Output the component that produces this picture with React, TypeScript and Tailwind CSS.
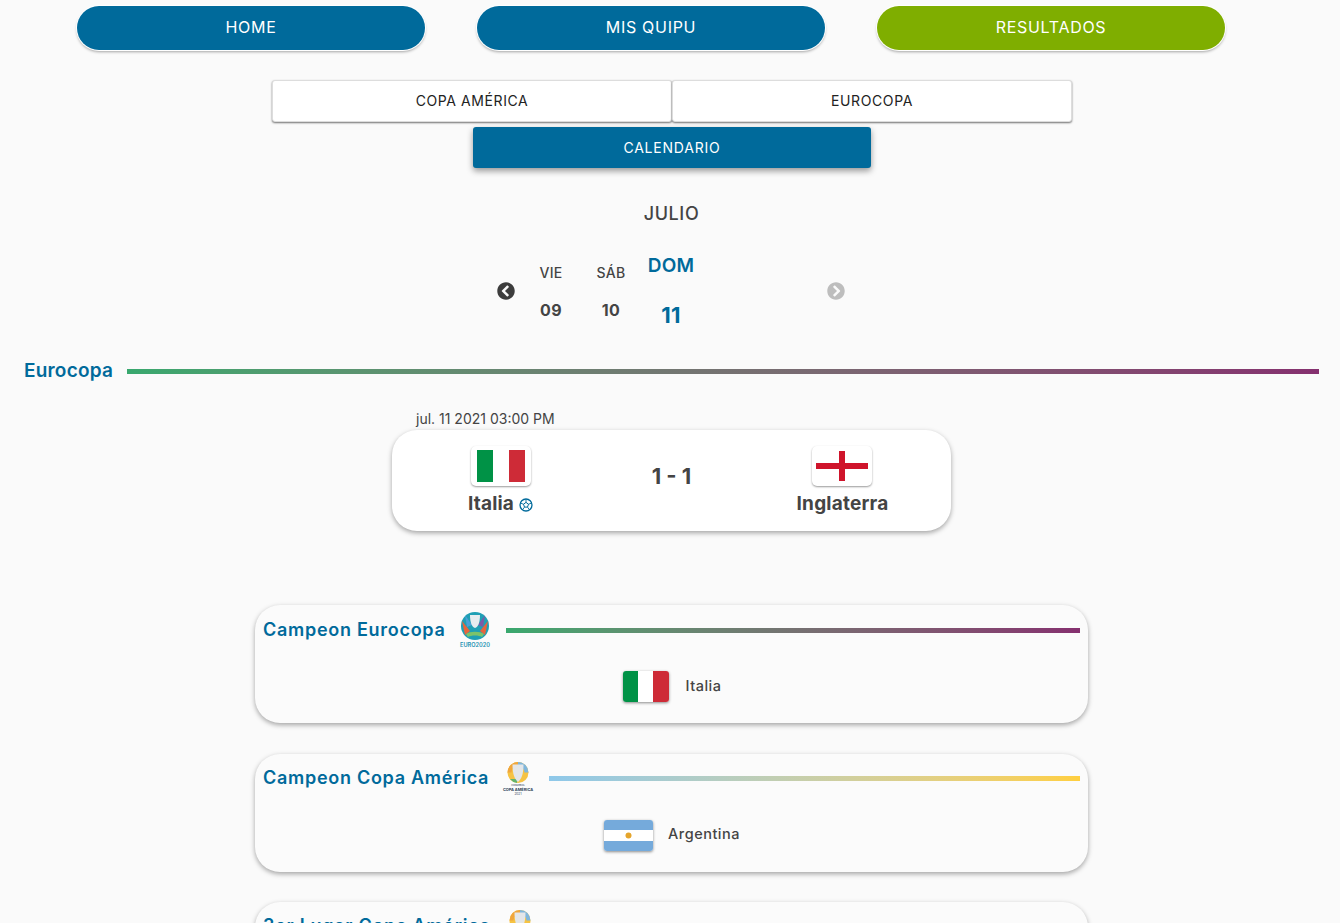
import type { ReactNode } from "react";
import { FaChevronCircleLeft, FaChevronCircleRight } from "react-icons/fa";

function NavButton({ label, active }: { label: string; active?: boolean }) {
  return (
    <div className="w-[400px] px-[26px]">
      <div
        className={`flex h-[44px] items-center justify-center rounded-[22px] pb-[2px] text-[16px] tracking-[0.7px] text-white shadow-[0_0_0_1px_#ffffff,0_2px_3px_rgba(0,0,0,0.35)] ${
          active ? "bg-[#7fae00]" : "bg-[#006a9b]"
        }`}
      >
        {label}
      </div>
    </div>
  );
}

function Tab({ label }: { label: string }) {
  return (
    <div className="flex h-[42px] w-[400px] items-center justify-center rounded-[3px] border border-[#dddddd] bg-white pb-[2px] text-[14px] tracking-[0.6px] text-[#222222] shadow-[0_1px_2px_rgba(0,0,0,0.55)]">
      {label}
    </div>
  );
}

function Day({ name, num, active }: { name: string; num: string; active?: boolean }) {
  return (
    <div className={`flex w-[60px] flex-col items-center tracking-[0.3px] ${active ? "text-[#006a9b]" : "text-[#444444]"}`}>
      <div className={`flex h-[36px] items-center ${active ? "text-[19px] font-semibold" : "pt-[12px] text-[14px] font-medium"}`}>{name}</div>
      <div className={`flex h-[50px] items-center ${active ? "pt-[12px] text-[22px] font-bold" : "pt-[2px] text-[16px] font-bold"}`}>{num}</div>
    </div>
  );
}

function ItalyFlag() {
  return (
    <div className="flex h-full w-full">
      <div className="flex-1 bg-[#009246]" />
      <div className="flex-1 bg-white" />
      <div className="flex-1 bg-[#ce2b37]" />
    </div>
  );
}

function EnglandFlag() {
  return (
    <svg viewBox="0 0 52 30" className="h-full w-full">
      <rect width="52" height="30" fill="#ffffff" />
      <rect x="23" width="6" height="30" fill="#cf142b" />
      <rect y="12" width="52" height="6" fill="#cf142b" />
    </svg>
  );
}

function ArgentinaFlag() {
  return (
    <svg viewBox="0 0 49 31" className="h-full w-full">
      <rect width="49" height="31" fill="#75aadb" />
      <rect y="10" width="49" height="11" fill="#ffffff" />
      <circle cx="24.5" cy="15.5" r="3" fill="#e5a52c" />
    </svg>
  );
}

function BallIcon() {
  return (
    <svg width="14" height="14" viewBox="0 0 14 14" fill="none" stroke="#006a9b" className="mt-[2px]">
      <circle cx="7" cy="7" r="6" strokeWidth="1.3" />
      <path d="M7 4.4 L9.5 6.2 L8.5 9.1 L5.5 9.1 L4.5 6.2 Z" strokeWidth="1" />
      <path d="M7 4.4 V1.4 M9.5 6.2 L12.3 5.2 M8.5 9.1 L10.3 11.6 M5.5 9.1 L3.7 11.6 M4.5 6.2 L1.7 5.2" strokeWidth="0.9" />
    </svg>
  );
}

function EuroLogo() {
  return (
    <svg width="32" height="36" viewBox="0 0 32 36">
      <circle cx="16" cy="14" r="14" fill="#1f9fb4" />
      <path d="M3 9 L11 19 L6 23 Z" fill="#e8643c" />
      <path d="M29 9 L21 19 L26 23 Z" fill="#e8643c" />
      <path d="M6 3 L13 13 L8 15 Z" fill="#4aa0d8" />
      <path d="M26 3 L19 13 L24 15 Z" fill="#7a5aa8" />
      <path d="M11 3 C11 11 13 15 16 16 C19 15 21 11 21 3 Z" fill="#e6ecef" />
      <path d="M7 22 C11 19 21 19 25 22 L23 25 C20 23 12 23 9 25 Z" fill="#7cc36a" />
      <text x="16" y="35" textAnchor="middle" fontSize="5.6" fill="#1a8fb0" fontFamily="Inter, sans-serif" fontWeight="600">EURO2020</text>
    </svg>
  );
}

function CopaLogo() {
  return (
    <svg width="32" height="34" viewBox="0 0 32 34">
      <circle cx="16" cy="10.5" r="10.5" fill="#f6c343" />
      <path d="M5.5 10.5 A10.5 10.5 0 0 1 16 0 L16 4 A6.5 6.5 0 0 0 9.5 10.5 Z" fill="#f0a63c" />
      <path d="M16 0 A10.5 10.5 0 0 1 26.5 10.5 L22.5 10.5 A6.5 6.5 0 0 0 16 4 Z" fill="#7fb6dc" />
      <path d="M8 17 A10.5 10.5 0 0 0 15 21 L15 17 Z" fill="#63b36b" />
      <path d="M10.5 2.5 C10.5 12 12.5 17 16 20 C19.5 17 21.5 12 21.5 2.5 Z" fill="#e3e6e8" />
      <text x="16" y="24" textAnchor="middle" fontSize="2.4" fill="#2a3a55" fontFamily="Inter, sans-serif">CONMEBOL</text>
      <text x="16" y="28.5" textAnchor="middle" fontSize="3.9" fill="#2a3a55" fontFamily="Inter, sans-serif" fontWeight="700">COPA AMÉRICA</text>
      <text x="16" y="33" textAnchor="middle" fontSize="3.2" fill="#2a3a55" fontFamily="Inter, sans-serif">2021</text>
    </svg>
  );
}

function ChampionCard({
  title,
  logo,
  lineClass,
  flag,
  flagClass,
  team,
  gapClass,
}: {
  title: string;
  logo: ReactNode;
  lineClass: string;
  flag?: ReactNode;
  flagClass?: string;
  team?: string;
  gapClass: string;
}) {
  return (
    <div className={`h-[118px] w-[833px] shrink-0 rounded-[25px] bg-[#fbfbfb] px-[8px] pt-[6px] shadow-[0_2px_5px_rgba(0,0,0,0.35)] ${gapClass}`}>
      <div className="flex h-[36px] items-center">
        <span className="text-[18px] font-semibold tracking-[0.72px] text-[#006a9b]">{title}</span>
        <span className="ml-[12px] mt-[2px] flex w-[34px] justify-center">{logo}</span>
        <div className={`ml-[14px] mt-[2px] h-[5px] flex-1 ${lineClass}`} />
      </div>
      {team && (
        <div className="mt-[24px] flex items-center justify-center gap-[15px] pl-[1px]">
          <div className={`h-[31px] overflow-hidden rounded-[3px] shadow-[0_1px_3px_rgba(0,0,0,0.45)] ${flagClass}`}>{flag}</div>
          <span className="mb-[2px] text-[14.5px] font-medium tracking-[0.5px] text-[#444444]">{team}</span>
        </div>
      )}
    </div>
  );
}

export default function App() {
  return (
    <div className="h-[923px] overflow-hidden bg-[#fafafa] font-['Inter',sans-serif]">
      <div className="flex pl-[51px] pt-[6px]">
        <NavButton label="HOME" />
        <NavButton label="MIS QUIPU" />
        <NavButton label="RESULTADOS" active />
      </div>

      <div className="mt-[30px] flex pl-[272px]">
        <Tab label="COPA AMÉRICA" />
        <Tab label="EUROCOPA" />
      </div>
      <div className="mt-[5px] pl-[473px]">
        <div className="flex h-[41px] w-[398px] items-center justify-center rounded-[3px] bg-[#006a9b] text-[14px] tracking-[0.8px] text-white shadow-[0_3px_6px_rgba(0,0,0,0.4)]">
          CALENDARIO
        </div>
      </div>

      <div className="mt-[34px] pl-[3px] text-center text-[18px] font-medium leading-[24px] tracking-[0.6px] text-[#444444]">JULIO</div>

      <div className="mt-[22px] flex h-[86px] items-center pl-[497px] text-[#444444]">
        <FaChevronCircleLeft className="h-[18px] w-[18px] text-[#3c3c3c]" />
        <div className="ml-[6px] flex">
          <Day name="VIE" num="09" />
          <Day name="SÁB" num="10" />
          <Day name="DOM" num="11" active />
        </div>
        <FaChevronCircleRight className="ml-[126px] h-[18px] w-[18px] text-[#bdbdbd]" />
      </div>

      <div className="mt-[25px] flex h-[24px] items-center pl-[24px] pr-[21px]">
        <span className="text-[19px] font-semibold tracking-[0.2px] text-[#006a9b]">Eurocopa</span>
        <div className="ml-[14px] h-[5px] flex-1 bg-linear-to-r from-[#38a86e] to-[#85306f]" />
      </div>

      <div className="mt-[26px] pl-[416px] text-[14px] leading-[20px] text-[#444444]">jul. 11 2021 03:00 PM</div>

      <div className="ml-[392px] mt-[1px] flex h-[101px] w-[559px] justify-center rounded-[25px] bg-white pt-[16px] shadow-[0_2px_5px_rgba(0,0,0,0.35)]">
        <div className="flex w-[171px] flex-col items-center">
          <div className="h-[40px] w-[60px] rounded-[5px] bg-white px-[6px] py-[4px] shadow-[0_1px_2px_rgba(0,0,0,0.4)]">
            <ItalyFlag />
          </div>
          <div className="mt-[7px] flex items-center gap-[5px] text-[19px] font-bold leading-[22px] tracking-[0.2px] text-[#444444]">
            Italia
            <BallIcon />
          </div>
        </div>
        <div className="w-[171px] pt-[16px] text-center text-[22px] font-bold leading-[28px] text-[#444444]">1 - 1</div>
        <div className="flex w-[171px] flex-col items-center">
          <div className="mr-[1px] h-[40px] w-[60px] rounded-[5px] bg-white px-[4px] py-[5px] shadow-[0_1px_2px_rgba(0,0,0,0.4)]">
            <EnglandFlag />
          </div>
          <div className="mt-[7px] text-[19px] font-bold leading-[22px] tracking-[0.2px] text-[#444444]">Inglaterra</div>
        </div>
      </div>

      <div className="ml-[255px] mt-[74px] flex flex-col">
        <ChampionCard
          title="Campeon Eurocopa"
          logo={<EuroLogo />}
          lineClass="bg-linear-to-r from-[#38a86e] to-[#85306f]"
          flag={<ItalyFlag />}
          flagClass="mr-[2px] w-[46px]"
          team="Italia"
          gapClass="mb-[30.5px]"
        />
        <ChampionCard
          title="Campeon Copa América"
          logo={<CopaLogo />}
          lineClass="bg-linear-to-r from-[#8ec8ea] to-[#ffcf3f]"
          flag={<ArgentinaFlag />}
          flagClass="w-[49px]"
          team="Argentina"
          gapClass="mb-[30px]"
        />
        <ChampionCard
          title="3er Lugar Copa América"
          logo={<CopaLogo />}
          lineClass="bg-linear-to-r from-[#8ec8ea] to-[#ffcf3f]"
          gapClass="mb-[30px]"
        />
      </div>
    </div>
  );
}
